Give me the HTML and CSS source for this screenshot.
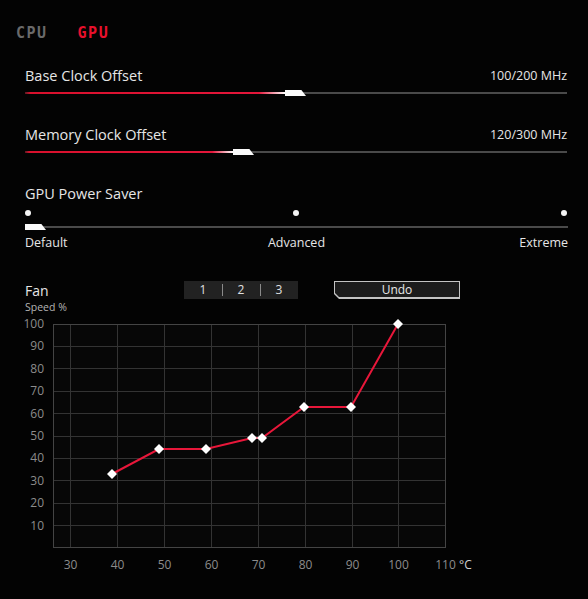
FILE: index.html
```html
<!DOCTYPE html>
<html lang="en">
<head>
    <meta charset="UTF-8">
    <meta name="viewport" content="width=device-width, initial-scale=1.0">
    <title>GPU Tuning</title>
    <link rel="stylesheet" href="styles.css">
</head>
<body>
    <div class="tabs">
        <span class="tab">CPU</span>
        <span class="tab active">GPU</span>
    </div>

    <div class="settings">
        <div class="setting">
            <div class="setting-head">
                <span class="setting-name">Base Clock Offset</span>
                <span class="setting-value">100/200 MHz</span>
            </div>
            <div class="slider">
                <div class="slider-fill" style="width: 260px;"></div>
                <div class="slider-thumb" style="left: 260px;"></div>
            </div>
        </div>

        <div class="setting">
            <div class="setting-head">
                <span class="setting-name">Memory Clock Offset</span>
                <span class="setting-value">120/300 MHz</span>
            </div>
            <div class="slider">
                <div class="slider-fill" style="width: 208px;"></div>
                <div class="slider-thumb" style="left: 208px;"></div>
            </div>
        </div>

        <div class="setting">
            <div class="setting-head">
                <span class="setting-name">GPU Power Saver</span>
            </div>
            <div class="steps">
                <span class="step-dot"></span>
                <span class="step-dot"></span>
                <span class="step-dot"></span>
            </div>
            <div class="slider wide">
                <div class="slider-thumb" style="left: 0;"></div>
            </div>
            <div class="step-labels">
                <span class="step-label first">Default</span>
                <span class="step-label mid">Advanced</span>
                <span class="step-label last">Extreme</span>
            </div>
        </div>

        <div class="fan-head">
            <div class="fan-title">
                <div class="fan-name">Fan</div>
                <div class="fan-unit">Speed %</div>
            </div>
            <div class="segments">
                <span class="segment">1</span>
                <span class="segment">2</span>
                <span class="segment">3</span>
            </div>
            <div class="undo"><span class="undo-inner">Undo</span></div>
        </div>
    </div>

    <svg class="chart" viewBox="0 312 588 263" width="588" height="263">
        <defs>
            <polygon id="knot" points="0,-5 5,0 0,5 -5,0"></polygon>
        </defs>
        <rect x="53" y="323" width="393" height="224" fill="#070707"></rect>
        <g stroke="#333" stroke-width="1">
            <line x1="70.5" y1="323" x2="70.5" y2="547"></line>
            <line x1="117.5" y1="323" x2="117.5" y2="547"></line>
            <line x1="164.5" y1="323" x2="164.5" y2="547"></line>
            <line x1="211.5" y1="323" x2="211.5" y2="547"></line>
            <line x1="258.5" y1="323" x2="258.5" y2="547"></line>
            <line x1="305.5" y1="323" x2="305.5" y2="547"></line>
            <line x1="352.5" y1="323" x2="352.5" y2="547"></line>
            <line x1="398.5" y1="323" x2="398.5" y2="547"></line>
            <line x1="53" y1="345.5" x2="446" y2="345.5"></line>
            <line x1="53" y1="367.5" x2="446" y2="367.5"></line>
            <line x1="53" y1="390.5" x2="446" y2="390.5"></line>
            <line x1="53" y1="412.5" x2="446" y2="412.5"></line>
            <line x1="53" y1="435.5" x2="446" y2="435.5"></line>
            <line x1="53" y1="457.5" x2="446" y2="457.5"></line>
            <line x1="53" y1="479.5" x2="446" y2="479.5"></line>
            <line x1="53" y1="502.5" x2="446" y2="502.5"></line>
            <line x1="53" y1="524.5" x2="446" y2="524.5"></line>
        </g>
        <rect x="53.5" y="323.5" width="392" height="223" fill="none" stroke="#444"></rect>

        <g class="axis-y" text-anchor="end">
            <text x="44" y="327">100</text>
            <text x="44" y="349">90</text>
            <text x="44" y="372">80</text>
            <text x="44" y="394">70</text>
            <text x="44" y="417">60</text>
            <text x="44" y="439">50</text>
            <text x="44" y="461">40</text>
            <text x="44" y="484">30</text>
            <text x="44" y="506">20</text>
            <text x="44" y="529">10</text>
        </g>
        <g class="axis-x" text-anchor="middle">
            <text x="70.5" y="568">30</text>
            <text x="117.5" y="568">40</text>
            <text x="164.5" y="568">50</text>
            <text x="211.5" y="568">60</text>
            <text x="258.5" y="568">70</text>
            <text x="305.5" y="568">80</text>
            <text x="352.5" y="568">90</text>
            <text x="398.5" y="568">100</text>
            <text x="445.5" y="568">110</text>
        </g>
        <text class="axis-unit" x="459" y="568">°C</text>

        <polyline class="curve" points="112,473 159,448 206,448 252,437 262,437 304,406 351,406 398,323"></polyline>
        <g class="knots">
            <use href="#knot" x="112" y="473"></use>
            <use href="#knot" x="159" y="448"></use>
            <use href="#knot" x="206" y="448"></use>
            <use href="#knot" x="252" y="437"></use>
            <use href="#knot" x="262" y="437"></use>
            <use href="#knot" x="304" y="406"></use>
            <use href="#knot" x="351" y="406"></use>
            <use href="#knot" x="398" y="323"></use>
        </g>
    </svg>
</body>
</html>
```

FILE: styles.css
```css
html, body {
    margin: 0;
    padding: 0;
}
body {
    width: 588px;
    height: 599px;
    overflow: hidden;
    background-color: #030303;
    color: #e6e6e6;
    font-family: "Open Sans", "Noto Sans", sans-serif;
}
.tabs {
    display: flex;
    gap: 30px;
    padding: 26px 0 0 16px;
    height: 14px;
}
.tab {
    font-family: "DejaVu Sans Mono", monospace;
    font-weight: bold;
    font-size: 15px;
    line-height: 14px;
    letter-spacing: 1.5px;
    color: #6a6a6a;
}
.tab.active {
    color: #e8102c;
}
.settings {
    padding: 0 21px 0 25px;
}
.setting {
    margin-top: 25px;
}
.setting + .setting {
    margin-top: 27px;
}
.setting-head {
    display: flex;
    justify-content: space-between;
    align-items: center;
    height: 20px;
}
.setting-name {
    font-size: 14.5px;
}
.setting-value {
    font-size: 12.5px;
}
.slider {
    position: relative;
    height: 8px;
    margin-top: 4px;
}
.slider::before {
    content: "";
    position: absolute;
    left: 0;
    right: 0;
    top: 3px;
    height: 2px;
    background-color: #4a4a4a;
}
.slider.wide {
    margin-top: 7px;
    margin-right: -1px;
}
.slider-fill {
    position: absolute;
    left: 0;
    top: 3px;
    height: 2px;
    background: linear-gradient(to right, #5a1a22 0, #d8102c 2%, #e4163a 90%, #ffffff 100%);
}
.slider-thumb {
    position: absolute;
    top: 1px;
    width: 21px;
    height: 6px;
    background-color: #fafafa;
    clip-path: polygon(0 0, 78% 0, 100% 100%, 0 100%);
}
.steps {
    display: flex;
    justify-content: space-between;
    margin-top: 7px;
    height: 6px;
}
.step-dot {
    width: 6px;
    height: 6px;
    border-radius: 50%;
    background-color: #f4f4f4;
}
.step-labels {
    display: grid;
    grid-template-columns: 1fr auto 1fr;
    margin-top: 4px;
    margin-right: -1px;
    font-size: 12.5px;
    line-height: 16px;
}
.step-label.mid {
    justify-self: center;
}
.step-label.last {
    justify-self: end;
}
.fan-head {
    display: flex;
    align-items: flex-start;
    margin-top: 30px;
}
.fan-title {
    width: 159px;
    padding-top: 2px;
}
.fan-name {
    font-size: 14px;
    line-height: 15px;
}
.fan-unit {
    margin-top: 3px;
    font-size: 10.5px;
    line-height: 12px;
    color: #b4b4b4;
}
.segments {
    display: flex;
    width: 114px;
    height: 18px;
    background-color: #222;
}
.segment {
    flex: 1;
    text-align: center;
    font-size: 12px;
    line-height: 18px;
    color: #e0e0e0;
}
.segment + .segment {
    background: linear-gradient(#8a8a8a, #8a8a8a) no-repeat 0 3px / 1px 12px;
}
.undo {
    margin-left: 36px;
    width: 126px;
    height: 18px;
    padding: 1px 1px 2px 1px;
    box-sizing: border-box;
    background-color: #c4c4c4;
    clip-path: polygon(0 0, 100% 0, 100% 100%, 5px 100%, 0 calc(100% - 5px));
}
.undo-inner {
    display: block;
    height: 15px;
    background-color: #1c1c1c;
    clip-path: polygon(0 0, 100% 0, 100% 100%, 4px 100%, 0 calc(100% - 4px));
    text-align: center;
    font-size: 12px;
    line-height: 15px;
    color: #e8e8e8;
}
.chart {
    display: block;
}
.chart text {
    font-family: "Open Sans", "Noto Sans", sans-serif;
    font-size: 12px;
    fill: #8c8c8c;
}
.chart .axis-unit {
    fill: #d0d0d0;
}
.curve {
    fill: none;
    stroke: #e8173a;
    stroke-width: 2;
}
.knots {
    fill: #ffffff;
}
```
